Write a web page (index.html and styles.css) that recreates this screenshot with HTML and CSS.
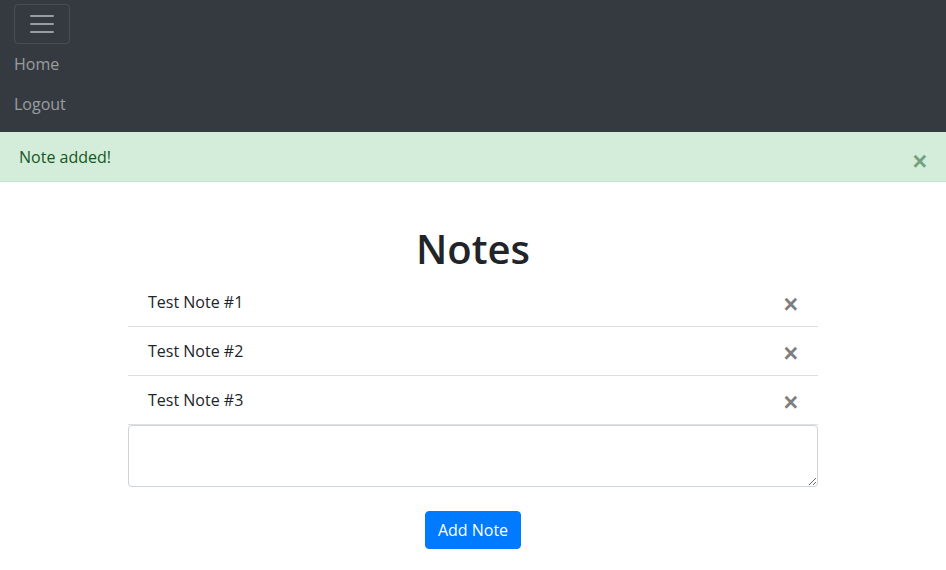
FILE: index.html
```html
<!DOCTYPE html>
<html lang="en">
<head>
<meta charset="utf-8">
<title>Notes</title>
<link rel="stylesheet" href="styles.css">
</head>
<body>
<nav class="navbar">
  <button class="toggler" type="button" aria-label="Toggle navigation">
    <svg width="30" height="30" viewBox="0 0 30 30"><path stroke="rgba(255,255,255,0.5)" stroke-linecap="round" stroke-miterlimit="10" stroke-width="2" d="M4 7h22M4 15h22M4 23h22"/></svg>
  </button>
  <ul class="nav-links">
    <li><a class="nav-link" href="#">Home</a></li>
    <li><a class="nav-link" href="#">Logout</a></li>
  </ul>
</nav>
<div class="alert">
  <span>Note added!</span>
  <button class="close alert-close" type="button" aria-label="Close">×</button>
</div>
<main class="container">
  <h1 class="title">Notes</h1>
  <ul class="list">
    <li class="item"><span>Test Note #1</span><button class="close" type="button">×</button></li>
    <li class="item"><span>Test Note #2</span><button class="close" type="button">×</button></li>
    <li class="item"><span>Test Note #3</span><button class="close" type="button">×</button></li>
  </ul>
  <textarea class="form-control" rows="2"></textarea>
  <div class="actions">
    <button class="btn" type="button">Add Note</button>
  </div>
</main>
</body>
</html>
```
FILE: styles.css
```css
* { box-sizing: border-box; }
html, body { margin: 0; }
body {
  font-family: "Open Sans", "Noto Sans", sans-serif;
  font-size: 16px;
  line-height: 1.5;
  color: #212529;
  background: #fff;
}
.navbar {
  background: #343a40;
  padding: 4px 14px 8px;
  display: flex;
  flex-direction: column;
  align-items: flex-start;
}
.toggler {
  width: 56px;
  height: 40px;
  padding: 4px 12px;
  background: transparent;
  border: 1px solid rgba(255,255,255,0.1);
  border-radius: 4px;
  display: flex;
  align-items: center;
  justify-content: center;
}
.toggler svg { display: block; }
.nav-links { list-style: none; margin: 0; padding: 0; }
.nav-link {
  display: block;
  padding: 8px 0;
  color: rgba(255,255,255,0.5);
  text-decoration: none;
}
.alert {
  position: relative;
  background: #d4edda;
  color: #155724;
  border-top: 1px solid #d4edda;
  border-bottom: 1px solid #c3e6cb;
  padding: 12px 20px 12px 19px;
  margin-bottom: 16px;
}
.close {
  background: transparent;
  border: 0;
  padding: 0;
  font-family: "Liberation Sans", sans-serif;
  font-size: 25px;
  font-weight: 700;
  line-height: 24px;
  height: 24px;
  color: #000;
  opacity: 0.5;
  cursor: pointer;
}
.alert-close {
  position: absolute;
  top: 0;
  right: 0;
  padding: 16px 19px 12px;
  height: auto;
  color: #155724;
}
.container {
  width: 690px;
  margin: 0 auto;
}
.title {
  margin: 43px 0 5px;
  font-size: 40px;
  font-weight: 600;
  line-height: 1.2;
  text-align: center;
}
.list { list-style: none; margin: 0; padding: 0; }
.item {
  display: flex;
  justify-content: space-between;
  align-items: center;
  height: 49px;
  padding: 12px 22px 12px 20px;
  border-bottom: 1px solid rgba(0,0,0,0.125);
}
.item .close { position: relative; top: 2px; left: 2px; }
.form-control {
  display: block;
  width: 100%;
  height: 62px;
  padding: 6px 12px;
  font-family: inherit;
  font-size: 16px;
  line-height: 1.5;
  color: #495057;
  border: 1px solid #ced4da;
  border-radius: 4px;
  margin: 0;
}
.actions {
  display: flex;
  justify-content: center;
  padding-top: 24px;
}
.btn {
  font-family: inherit;
  font-size: 16px;
  line-height: 1.5;
  padding: 6px 12px;
  color: #fff;
  background: #007bff;
  border: 1px solid #007bff;
  border-radius: 4px;
}
```
